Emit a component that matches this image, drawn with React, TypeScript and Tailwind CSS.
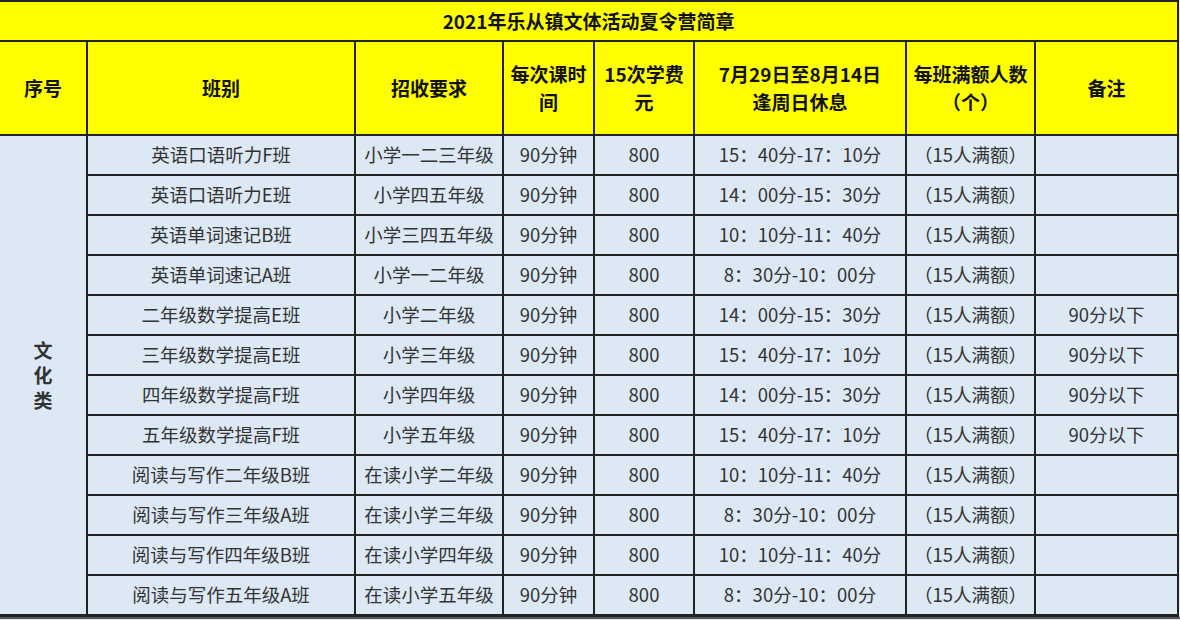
const rows = [
  ['英语口语听力F班', '小学一二三年级', '15：40分-17：10分', ''],
  ['英语口语听力E班', '小学四五年级', '14：00分-15：30分', ''],
  ['英语单词速记B班', '小学三四五年级', '10：10分-11：40分', ''],
  ['英语单词速记A班', '小学一二年级', '8：30分-10：00分', ''],
  ['二年级数学提高E班', '小学二年级', '14：00分-15：30分', '90分以下'],
  ['三年级数学提高E班', '小学三年级', '15：40分-17：10分', '90分以下'],
  ['四年级数学提高F班', '小学四年级', '14：00分-15：30分', '90分以下'],
  ['五年级数学提高F班', '小学五年级', '15：40分-17：10分', '90分以下'],
  ['阅读与写作二年级B班', '在读小学二年级', '10：10分-11：40分', ''],
  ['阅读与写作三年级A班', '在读小学三年级', '8：30分-10：00分', ''],
  ['阅读与写作四年级B班', '在读小学四年级', '10：10分-11：40分', ''],
  ['阅读与写作五年级A班', '在读小学五年级', '8：30分-10：00分', ''],
]

const th = 'border-2 border-[#222] bg-[#ffff00] text-center align-middle font-bold text-[19px] leading-[28px] text-[#111] p-0'
const td = 'border-2 border-[#222] text-center align-middle text-[18.5px] text-[#333] h-[40px] p-0'

export default function App() {
  return (
    <div
      className="w-[1180px] h-[620px] overflow-hidden bg-[#dfe9f5]"
      style={{ fontFamily: '"Noto Sans CJK SC", "Noto Sans", sans-serif' }}
    >
      <table className="w-[1178px] border-collapse table-fixed border-b-[3px] border-[#222]">
        <colgroup>
          <col className="w-[87px]" />
          <col className="w-[268px]" />
          <col className="w-[148px]" />
          <col className="w-[91px]" />
          <col className="w-[100px]" />
          <col className="w-[212px]" />
          <col className="w-[129px]" />
          <col className="w-[143px]" />
        </colgroup>
        <thead>
          <tr className="h-[40px]">
            <th colSpan={8} className={th + ' border-l-0'}>
              2021年乐从镇文体活动夏令营简章
            </th>
          </tr>
          <tr className="h-[94px]">
            <th className={th + ' border-l-0'}>序号</th>
            <th className={th}>班别</th>
            <th className={th}>招收要求</th>
            <th className={th}>
              每次课时
              <br />间
            </th>
            <th className={th}>
              15次学费
              <br />元
            </th>
            <th className={th}>
              7月29日至8月14日
              <br />逢周日休息
            </th>
            <th className={th}>
              每班满额人数
              <br />（个）
            </th>
            <th className={th}>备注</th>
          </tr>
        </thead>
        <tbody className="bg-[#dde8f5]">
          {rows.map((r, i) => (
            <tr key={i}>
              {i === 0 && (
                <td rowSpan={12} className={td + ' border-l-0 font-bold text-[#111] text-[19px]'}>
                  <div className="flex flex-col items-center leading-[25px]">
                    <span>文</span>
                    <span>化</span>
                    <span>类</span>
                  </div>
                </td>
              )}
              <td className={td}>{r[0]}</td>
              <td className={td}>{r[1]}</td>
              <td className={td}>90分钟</td>
              <td className={td}>800</td>
              <td className={td}>{r[2]}</td>
              <td className={td}>（15人满额）</td>
              <td className={td}>{r[3]}</td>
            </tr>
          ))}
        </tbody>
      </table>
      <div className="h-[2px] bg-[#555]" />
    </div>
  )
}
